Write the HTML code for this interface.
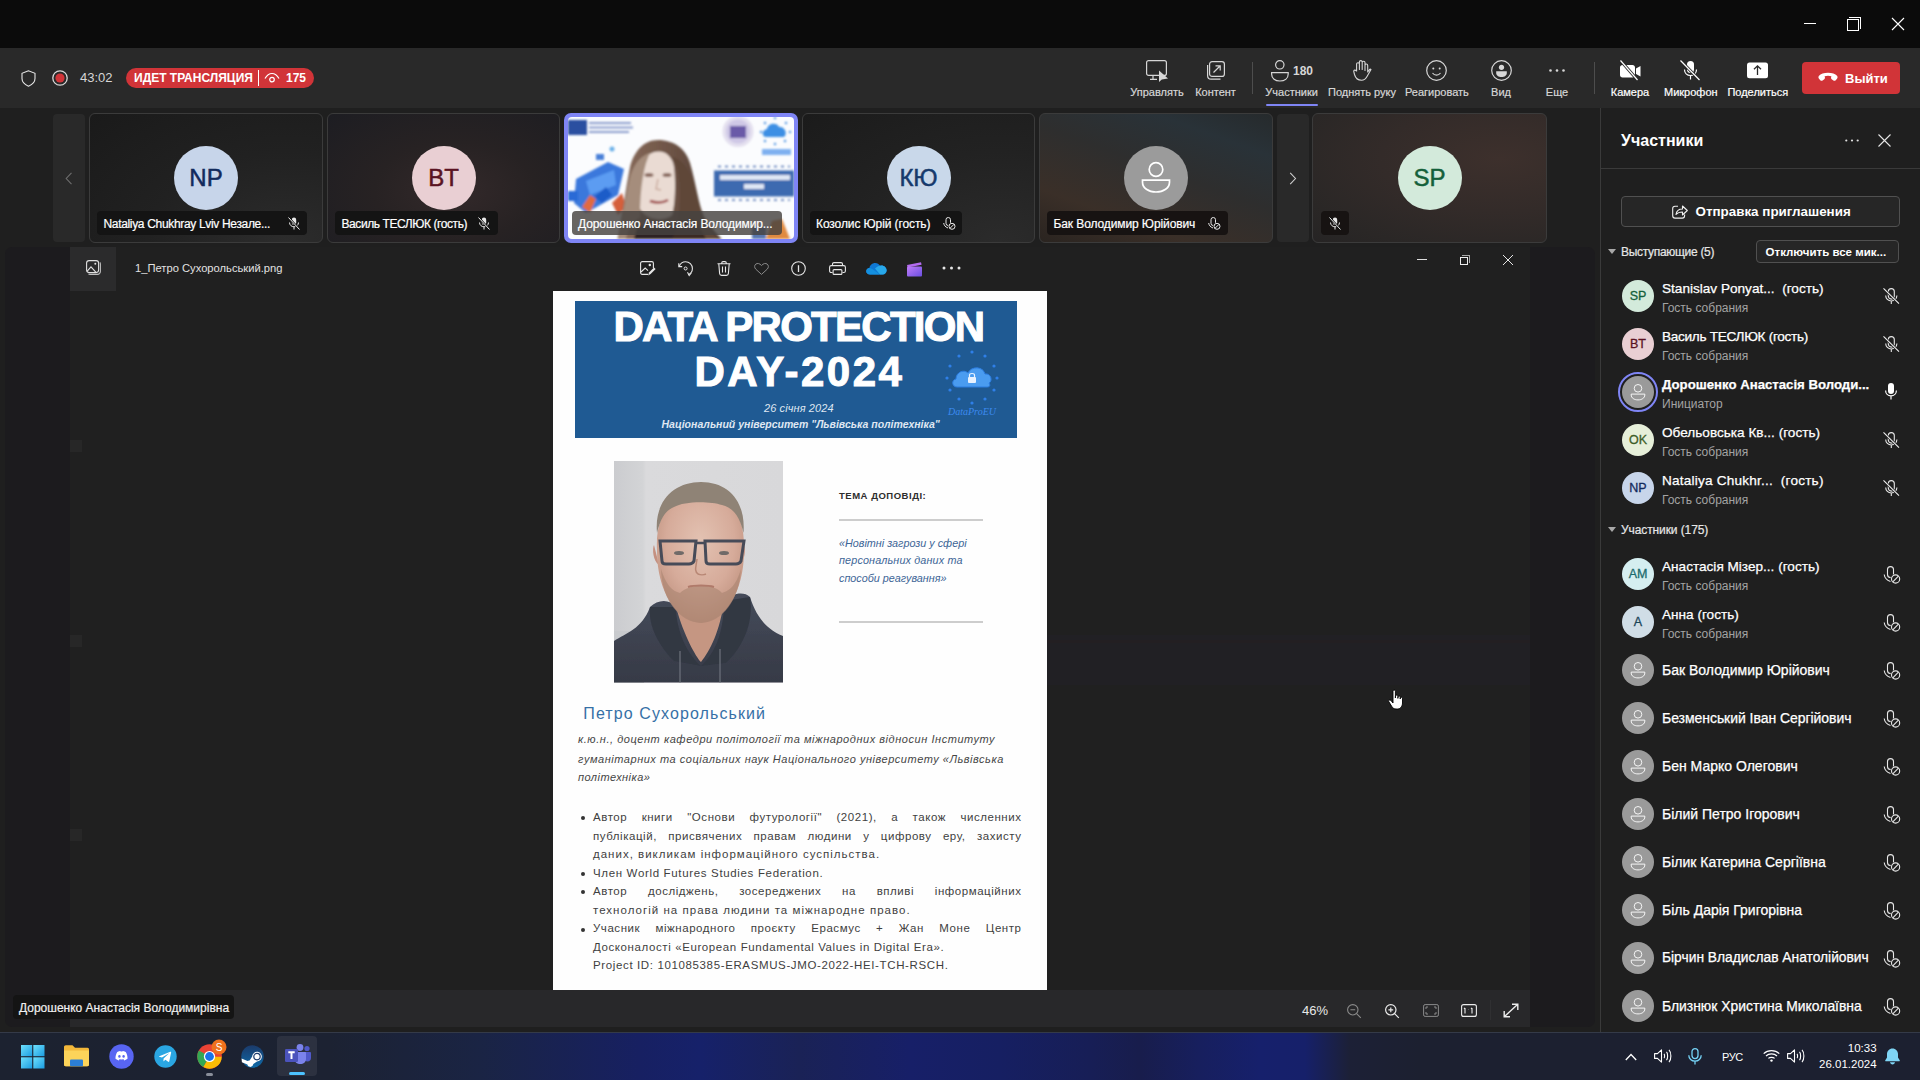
<!DOCTYPE html>
<html><head><meta charset="utf-8">
<style>
*{margin:0;padding:0;box-sizing:border-box}
html,body{width:1920px;height:1080px;overflow:hidden;background:#0b0b0b;font-family:"Liberation Sans",sans-serif;color:#fff}
.a{position:absolute}
.nw{white-space:nowrap}
svg{position:absolute;overflow:visible}
/* header */
#hdr{left:0;top:48px;width:1920px;height:60px;background:#292929}
.tb{position:absolute;top:88px;font-size:11px;color:#d6d6d6;white-space:nowrap;line-height:11px;-webkit-text-stroke:0.2px currentColor}
/* strip */
#strip{left:0;top:108px;width:1600px;height:142px;background:#1f1f1f}
.tile{position:absolute;top:113px;height:130px;border:1px solid #3b3b3b;border-radius:6px;overflow:hidden}
.av{position:absolute;border-radius:50%;text-align:center;-webkit-text-stroke:0.5px currentColor}
.nl{position:absolute;top:211px;height:24px;background:#141414;border-radius:4px}
.nlt{position:absolute;top:216.7px;font-size:12px;color:#fff;white-space:nowrap;line-height:14px;letter-spacing:-0.1px;-webkit-text-stroke:0.2px #fff}
/* panel */
#panel{left:1600px;top:108px;width:320px;height:924px;background:#1f1f1f;border-left:1px solid #3a3a3a}
.pn{position:absolute;left:1662px;font-size:13.6px;color:#fff;white-space:nowrap;line-height:16px;margin-top:-1px;-webkit-text-stroke:0.25px #fff}
.ps{position:absolute;left:1662px;font-size:12px;color:#a3a3a3;white-space:nowrap;line-height:14px;margin-top:-0.6px}
.pav{position:absolute;left:1622px;width:32px;height:32px;border-radius:50%;text-align:center;font-size:12.5px;line-height:32px;-webkit-text-stroke:0.3px currentColor}
.jl{position:absolute;left:40px;width:428.5px;letter-spacing:0.55px;font-size:11.5px;line-height:11.5px;color:#3f3f3f;text-align:justify;text-align-last:justify;white-space:nowrap}
.bl{position:absolute;left:40px;font-size:11.5px;line-height:11.5px;color:#3f3f3f;white-space:nowrap}
</style></head><body>

<!-- title bar -->
<div class="a" style="left:0;top:0;width:1920px;height:48px;background:#0b0b0b"></div>
<div class="a" style="left:1804px;top:23px;width:12px;height:1px;background:#fff"></div>
<div class="a" style="left:1847px;top:19px;width:12px;height:12px;border:1px solid #fff"></div>
<div class="a" style="left:1849px;top:17px;width:12px;height:12px;border-top:1px solid #fff;border-right:1px solid #fff"></div>
<svg style="left:1892px;top:18px" width="12" height="12"><path d="M0 0L12 12M12 0L0 12" stroke="#fff" stroke-width="1.1"/></svg>

<!-- header -->
<div id="hdr" class="a"></div>
<svg style="left:21px;top:70px" width="15" height="17" viewBox="0 0 15 17"><path d="M7.5 0.8L1 3.3V8.5C1 12 3.8 14.6 7.5 16.2C11.2 14.6 14 12 14 8.5V3.3Z" fill="none" stroke="#e6e6e6" stroke-width="1.1"/></svg>
<svg style="left:52px;top:70px" width="16" height="16" viewBox="0 0 16 16"><circle cx="8" cy="8" r="7.2" fill="none" stroke="#d8d8d8" stroke-width="1.3"/><circle cx="8" cy="8" r="4.6" fill="#d13438"/></svg>
<div class="a nw" style="left:80px;top:71.4px;font-size:13px;line-height:13px;color:#d6d6d6">43:02</div>
<div class="a" style="left:126px;top:68px;width:188px;height:20px;border-radius:10px;background:#d13438"></div>
<div class="a nw" style="left:134px;top:71.6px;font-size:12px;line-height:12px;font-weight:700;color:#fff">ИДЕТ ТРАНСЛЯЦИЯ</div>
<div class="a" style="left:258px;top:70px;width:1px;height:16px;background:#fff"></div>
<svg style="left:264px;top:72px" width="16" height="12" viewBox="0 0 16 12"><path d="M1 6.5C3 3 5.5 1.5 8 1.5S13 3 15 6.5" fill="none" stroke="#fff" stroke-width="1.2"/><circle cx="8" cy="7.6" r="2.3" fill="none" stroke="#fff" stroke-width="1.2"/></svg>
<div class="a nw" style="left:286px;top:71.6px;font-size:12px;line-height:12px;font-weight:700;color:#fff">175</div>

<!-- toolbar buttons -->
<svg style="left:1146px;top:60px" width="23" height="23" viewBox="0 0 23 23"><rect x="0.6" y="0.6" width="19.8" height="14.8" rx="2" fill="none" stroke="#d6d6d6" stroke-width="1.2"/><path d="M7 15.5V19M4 19.3H11" stroke="#d6d6d6" stroke-width="1.2"/><path d="M13 10.5L13 22L15.8 19.4L22 18.6Z" fill="#d6d6d6"/></svg>
<svg style="left:1207px;top:61px" width="18" height="19" viewBox="0 0 18 19"><rect x="2.6" y="0.6" width="14.8" height="14.8" rx="2.5" fill="none" stroke="#d6d6d6" stroke-width="1.2"/><path d="M0.6 4V14.5C0.6 16.6 2 18.2 4 18.2H13.5" fill="none" stroke="#d6d6d6" stroke-width="1.2"/><path d="M6.5 11.5L13 5M8.5 4.8H13.2V9.5" fill="none" stroke="#d6d6d6" stroke-width="1.2"/></svg>
<div class="a" style="left:1252px;top:62px;width:1px;height:32px;background:#4d4d4d"></div>
<svg style="left:1271px;top:60px" width="18" height="22" viewBox="0 0 18 22"><circle cx="8.8" cy="4.8" r="4.2" fill="none" stroke="#d6d6d6" stroke-width="1.2"/><path d="M0.6 12.6H17.2V14C17.2 18.5 13.5 21 8.9 21S0.6 18.5 0.6 14Z" fill="none" stroke="#d6d6d6" stroke-width="1.2"/></svg>
<div class="a nw" style="left:1293px;top:64.5px;font-size:12px;line-height:12px;font-weight:700;color:#d6d6d6">180</div>
<div class="a" style="left:1266px;top:104px;width:52px;height:2px;border-radius:1px;background:#7f85f5"></div>
<svg style="left:1353px;top:60px" width="18" height="21" viewBox="0 0 18 21"><path d="M3.6 11V4.2C3.6 3.3 4.2 2.7 5 2.7S6.4 3.3 6.4 4.2V9.5V2C6.4 1.2 7 0.6 7.8 0.6S9.2 1.2 9.2 2V9.5V2.6C9.2 1.8 9.8 1.2 10.6 1.2S12 1.8 12 2.6V10.5V5.4C12 4.6 12.6 4 13.3 4S14.7 4.6 14.7 5.4V12L16.5 9.6C17 9 17.6 9 18 9.5L14 16.5C12.8 18.7 11 20.3 8.6 20.3C5 20.3 2.4 17.6 1.5 14.5L0.8 11.6C0.6 10.8 1 10.2 1.7 10.1C2.5 10 3 10.4 3.6 11Z" fill="none" stroke="#d6d6d6" stroke-width="1.1" stroke-linejoin="round"/></svg>
<svg style="left:1426px;top:60px" width="21" height="21" viewBox="0 0 21 21"><circle cx="10.5" cy="10.5" r="9.8" fill="none" stroke="#d6d6d6" stroke-width="1.2"/><circle cx="7.3" cy="8.6" r="1" fill="#d6d6d6"/><circle cx="13.7" cy="8.6" r="1" fill="#d6d6d6"/><path d="M6.5 13C7.6 14.5 9 15.2 10.5 15.2S13.4 14.5 14.5 13" fill="none" stroke="#d6d6d6" stroke-width="1.2"/></svg>
<svg style="left:1491px;top:60px" width="21" height="21" viewBox="0 0 21 21"><circle cx="10.5" cy="10.5" r="9.8" fill="none" stroke="#d6d6d6" stroke-width="1.2"/><circle cx="10.5" cy="7.3" r="2.6" fill="#d6d6d6"/><path d="M5.2 11.2H15.8V13C15.8 15.5 13.5 17 10.5 17S5.2 15.5 5.2 13Z" fill="#d6d6d6"/></svg>
<svg style="left:1549px;top:69px" width="17" height="3" viewBox="0 0 17 3"><circle cx="1.5" cy="1.5" r="1.3" fill="#d6d6d6"/><circle cx="8" cy="1.5" r="1.3" fill="#d6d6d6"/><circle cx="14.5" cy="1.5" r="1.3" fill="#d6d6d6"/></svg>
<div class="a" style="left:1594px;top:62px;width:1px;height:32px;background:#4d4d4d"></div>
<svg style="left:1620px;top:60px" width="22" height="21" viewBox="0 0 22 21"><path d="M2.5 5H12.5C14 5 15 6 15 7.5V15C15 16.5 14 17.5 12.5 17.5H2.5C1 17.5 0 16.5 0 15V7.5C0 6 1 5 2.5 5Z M16 8.5L20.5 6V16.5L16 14Z" fill="#fff"/><path d="M0.5 0.5L17.5 20" stroke="#292929" stroke-width="3"/><path d="M0.5 0.5L17.5 20" stroke="#fff" stroke-width="1.2"/></svg>
<svg style="left:1680px;top:60px" width="21" height="21" viewBox="0 0 21 21"><rect x="7" y="1" width="7" height="12" rx="3.5" fill="#fff"/><path d="M4.5 9.5C4.5 13 7 15.5 10.5 15.5S16.5 13 16.5 9.5M10.5 15.5V19.5" fill="none" stroke="#fff" stroke-width="1.2"/><path d="M0.5 0.5L19.5 20" stroke="#292929" stroke-width="3"/><path d="M0.5 0.5L19.5 20" stroke="#fff" stroke-width="1.2"/></svg>
<svg style="left:1747px;top:62px" width="22" height="17" viewBox="0 0 22 17"><rect x="0" y="0.5" width="21" height="15.8" rx="2.5" fill="#fff"/><path d="M10.5 13V4M7 7.3L10.5 3.8L14 7.3" fill="none" stroke="#292929" stroke-width="1.3"/></svg>
<div class="tb" style="left:1107px;top:86.8px;width:100px;text-align:center">Управлять</div>
<div class="tb" style="left:1165.5px;top:86.8px;width:100px;text-align:center">Контент</div>
<div class="tb" style="left:1241.6px;top:86.8px;width:100px;text-align:center">Участники</div>
<div class="tb" style="left:1312px;top:86.8px;width:100px;text-align:center">Поднять руку</div>
<div class="tb" style="left:1386.9px;top:86.8px;width:100px;text-align:center">Реагировать</div>
<div class="tb" style="left:1451px;top:86.8px;width:100px;text-align:center">Вид</div>
<div class="tb" style="left:1507px;top:86.8px;width:100px;text-align:center">Еще</div>
<div class="tb" style="left:1580px;top:86.8px;width:100px;text-align:center;color:#fff">Камера</div>
<div class="tb" style="left:1640.8px;top:86.8px;width:100px;text-align:center;color:#fff">Микрофон</div>
<div class="tb" style="left:1707.8px;top:86.8px;width:100px;text-align:center;color:#fff">Поделиться</div>
<div class="a" style="left:1802px;top:62px;width:98px;height:32px;border-radius:4px;background:#d13438"></div>
<svg style="left:1818px;top:72px" width="20" height="10" viewBox="0 0 20 10"><path d="M10 0.8C6 0.8 2.6 2 1 3.8C0.2 4.7 0.3 6 1 6.8L2.3 8.3C2.9 9 3.9 9 4.6 8.5L6.3 7.2C6.9 6.8 7.1 6 6.9 5.3L6.6 4.3C7.6 3.9 8.8 3.7 10 3.7S12.4 3.9 13.4 4.3L13.1 5.3C12.9 6 13.1 6.8 13.7 7.2L15.4 8.5C16.1 9 17.1 9 17.7 8.3L19 6.8C19.7 6 19.8 4.7 19 3.8C17.4 2 14 0.8 10 0.8Z" fill="#fff"/></svg>
<div class="a nw" style="left:1845px;top:72px;font-size:13px;line-height:13px;font-weight:700;color:#fff">Выйти</div>

<!-- strip -->
<div id="strip" class="a"></div>
<div class="a" style="left:53px;top:114px;width:32px;height:128px;border-radius:4px;background:#292929"></div>
<svg style="left:65px;top:172px" width="8" height="13" viewBox="0 0 8 13"><path d="M6.5 0.8L1.2 6.5L6.5 12.2" fill="none" stroke="#6e6e6e" stroke-width="1.1"/></svg>
<div class="a" style="left:1277px;top:114px;width:32px;height:128px;border-radius:4px;background:#292929"></div>
<svg style="left:1289px;top:172px" width="8" height="13" viewBox="0 0 8 13"><path d="M1.2 0.8L6.5 6.5L1.2 12.2" fill="none" stroke="#cfcfcf" stroke-width="1.1"/></svg>

<div class="tile" style="left:89px;width:234px;background:radial-gradient(ellipse at 85% 100%,#2c2c2c 0%,#212121 50%,#1a1a1a 100%)"></div>
<div class="tile" style="left:327px;width:233px;background:radial-gradient(ellipse at 55% 60%,#33292a 0%,#272223 45%,#1d1d22 100%)"></div>
<div class="tile" style="left:802px;width:233px;background:radial-gradient(ellipse at 85% 100%,#2b2b2b 0%,#222 50%,#1b1b1b 100%)"></div>
<div class="tile" style="left:1039px;width:234px;background:linear-gradient(20deg,#2a2420 0%,#3a2f28 25%,#2e2e2e 55%,#293238 80%,#262a2c 100%)"></div>
<div class="tile" style="left:1312px;width:235px;background:radial-gradient(ellipse at 80% 35%,#3d302c 0%,#332b29 45%,#2a2726 80%,#262424 100%)"></div>

<div class="av" style="left:174px;top:146px;width:64px;height:64px;background:#c7d5ea;color:#122a5c;font-size:24px;line-height:64px">NP</div>
<div class="av" style="left:411.5px;top:146px;width:64px;height:64px;background:#e9cfd3;color:#5a1322;font-size:24px;line-height:64px">BT</div>
<div class="av" style="left:886.5px;top:146px;width:64px;height:64px;background:#c9d8ea;color:#163a6c;font-size:24px;line-height:64px">КЮ</div>
<div class="av" style="left:1124px;top:146px;width:64px;height:64px;background:#9b9b9b"></div>
<svg style="left:1140px;top:161px" width="32" height="32" viewBox="0 0 32 32"><circle cx="16" cy="8.5" r="6.8" fill="none" stroke="#fff" stroke-width="1.7"/><path d="M2.5 19.2H29.5V21.2C29.5 27 23.5 31 16 31S2.5 27 2.5 21.2Z" fill="none" stroke="#fff" stroke-width="1.7"/></svg>
<div class="av" style="left:1397.5px;top:146px;width:64px;height:64px;background:#d3eadb;color:#13603a;font-size:24px;line-height:64px">SP</div>

<!-- selected video tile -->
<div class="a" style="left:564px;top:113px;width:234px;height:130px;border-radius:7px;background:#7f85f5"></div>
<div class="a" style="left:568px;top:117px;width:226px;height:122px;border-radius:4px;overflow:hidden;background:#fbfcfe">
 <svg style="left:0;top:0" width="226" height="122" viewBox="0 0 226 122">
  <defs><filter id="vb" x="-5%" y="-5%" width="110%" height="110%"><feGaussianBlur stdDeviation="1"/></filter>
  <linearGradient id="hairg" x1="0" y1="0" x2="1" y2="0"><stop offset="0" stop-color="#8a6d5c"/><stop offset="0.5" stop-color="#6e5446"/><stop offset="1" stop-color="#4e3a30"/></linearGradient></defs>
  <g filter="url(#vb)">
  <rect x="0" y="3" width="19" height="15" fill="#2b4fa0"/>
  <rect x="21" y="5" width="42" height="2" fill="#8a9ccc"/><rect x="21" y="9.5" width="44" height="2" fill="#8a9ccc"/><rect x="21" y="14" width="40" height="2" fill="#8a9ccc"/>
  <circle cx="170" cy="14.5" r="15.5" fill="#e4e0ef"/><circle cx="170" cy="14.5" r="12" fill="#cfc8e6"/><rect x="162" y="9" width="16" height="12" fill="#6a5aa8"/>
  <path d="M198 20C194 20 193 13 199 12C200 6 209 5 211 10C217 9 220 17 216 20Z" fill="#3d8fe4"/>
  <g fill="#4a90e0"><circle cx="207" cy="1" r="1.2"/><circle cx="218" cy="6" r="1.2"/><circle cx="222" cy="15" r="1.2"/><circle cx="217" cy="24" r="1.2"/><circle cx="207" cy="27" r="1.2"/><circle cx="197" cy="24" r="1.2"/><circle cx="193" cy="15" r="1.2"/><circle cx="197" cy="6" r="1.2"/></g>
  <rect x="194" y="32" width="29" height="6" fill="#7fb0f0"/>
  <path d="M150 49.5H222" stroke="#4a6cb0" stroke-width="1.6" stroke-dasharray="3 4"/>
  <path d="M150 83H222" stroke="#4a6cb0" stroke-width="1.6" stroke-dasharray="3 4"/>
  <rect x="146" y="53.5" width="80" height="26" fill="#3e6bb0"/>
  <rect x="152" y="58" width="70" height="5" fill="#dfe7f5"/><rect x="176" y="67" width="20" height="5" fill="#dfe7f5"/>
  <path d="M8 62L40 45L56 52L50 78L18 96L6 86Z" fill="#3a78dc"/>
  <path d="M18 64L46 53L48 68L22 78Z" fill="#5b9cf2"/>
  <path d="M26 80L38 70L44 78L34 86Z" fill="#1f5cc8"/>
  <circle cx="44" cy="32" r="2.5" fill="#6ab0e8"/><rect x="28" y="37" width="8" height="6" fill="#4a80d8"/>
  <rect x="0" y="74" width="10" height="10" fill="#2a6ad6"/>
  <path d="M14 90L22 78L28 82L22 96Z" fill="#e06a40"/>
  <path d="M44 86L54 76L58 90L50 98Z" fill="#d55f3a"/>
  <path d="M49.5 122C54 100 58 70 62 50C66 34 76 23 90 23C106 23 118 32 122 46C128 66 130 86 136 100C142 110 150 118 153.7 122Z" fill="url(#hairg)"/>
  <path d="M72 92C70 70 70 46 80 38C92 30 104 36 106 50C108 66 107 88 104 98C96 104 80 104 72 92Z" fill="#eadbd3"/>
  <path d="M62 60C66 46 74 38 82 36C76 48 72 70 72 100C66 104 60 110 58 122H50C54 100 58 78 62 60Z" fill="#a58d7c"/>
  <path d="M104 40C112 50 114 80 110 104C116 110 124 116 130 122H150C140 110 132 96 128 76C124 58 118 44 104 40Z" fill="#5e4638"/>
  <ellipse cx="81" cy="58" rx="4.5" ry="2" fill="#8a6a5e"/><ellipse cx="99" cy="58" rx="4.5" ry="2" fill="#8a6a5e"/>
  <path d="M90 62L88 72L93 73" stroke="#c8a89a" stroke-width="1.3" fill="none"/>
  <path d="M82 84C88 86 95 86 100 83" stroke="#a04a4a" stroke-width="2.5" fill="none"/>
  <path d="M70 106C80 112 100 112 112 104L118 122H66Z" fill="#2e2420"/>
  <path d="M104 122C108 110 118 102 126 104C132 110 136 118 138 122Z" fill="#3a2a24"/>
  <path d="M198 122L204 104L214 102L222 122Z" fill="#e08a40"/><rect x="184" y="110" width="14" height="12" fill="#5a78b0"/>
  </g>
 </svg>
</div>

<div class="nl" style="left:97px;width:210px"></div>
<div class="nlt" style="left:103.5px;letter-spacing:-0.33px">Nataliya Chukhray Lviv Незале...</div>
<div class="nl" style="left:335px;width:163px"></div>
<div class="nlt" style="left:341.5px;letter-spacing:-0.42px">Василь ТЕСЛЮК (гость)</div>
<div class="nl" style="left:572px;width:210px;background:rgba(70,66,64,0.82)"></div>
<div class="nlt" style="left:578px">Дорошенко Анастасія Володимир...</div>
<div class="nl" style="left:810px;width:152px"></div>
<div class="nlt" style="left:816px">Козолис Юрій (гость)</div>
<div class="nl" style="left:1047px;width:181px;background:#171312"></div>
<div class="nlt" style="left:1053.5px">Бак Володимир Юрійович</div>
<div class="nl" style="left:1320.5px;width:28px;background:#171312"></div>
<svg style="left:287.5px;top:216.5px" width="12" height="13" viewBox="0 0 12 13"><rect x="3.8" y="0.5" width="4.4" height="7.5" rx="2.2" fill="#e8e8e8"/><path d="M1.5 5.5C1.5 8 3.5 9.8 6 9.8S10.5 8 10.5 5.5M6 9.8V12.5" fill="none" stroke="#e8e8e8" stroke-width="1"/><path d="M0.5 0.5L11.5 12.5" stroke="#141414" stroke-width="2.2"/><path d="M0.5 0.5L11.5 12.5" stroke="#f0f0f0" stroke-width="1"/></svg>
<svg style="left:477.5px;top:216.5px" width="12" height="13" viewBox="0 0 12 13"><rect x="3.8" y="0.5" width="4.4" height="7.5" rx="2.2" fill="#e8e8e8"/><path d="M1.5 5.5C1.5 8 3.5 9.8 6 9.8S10.5 8 10.5 5.5M6 9.8V12.5" fill="none" stroke="#e8e8e8" stroke-width="1"/><path d="M0.5 0.5L11.5 12.5" stroke="#141414" stroke-width="2.2"/><path d="M0.5 0.5L11.5 12.5" stroke="#f0f0f0" stroke-width="1"/></svg>
<svg style="left:942.5px;top:216.5px" width="13" height="13" viewBox="0 0 13 13"><rect x="3" y="0.5" width="4.5" height="8" rx="2.2" fill="none" stroke="#e8e8e8" stroke-width="1"/><path d="M0.7 6C0.9 8 2.2 10 5 11" fill="none" stroke="#e8e8e8" stroke-width="1"/><circle cx="9" cy="9.3" r="3.9" fill="#151312"/><circle cx="9" cy="9.3" r="3" fill="none" stroke="#e8e8e8" stroke-width="1"/><path d="M7 11.3L11 7.3" stroke="#e8e8e8" stroke-width="1"/></svg>
<svg style="left:1208px;top:216.5px" width="13" height="13" viewBox="0 0 13 13"><rect x="3" y="0.5" width="4.5" height="8" rx="2.2" fill="none" stroke="#e8e8e8" stroke-width="1"/><path d="M0.7 6C0.9 8 2.2 10 5 11" fill="none" stroke="#e8e8e8" stroke-width="1"/><circle cx="9" cy="9.3" r="3.9" fill="#151312"/><circle cx="9" cy="9.3" r="3" fill="none" stroke="#e8e8e8" stroke-width="1"/><path d="M7 11.3L11 7.3" stroke="#e8e8e8" stroke-width="1"/></svg>
<svg style="left:1329px;top:216.5px" width="12" height="13" viewBox="0 0 12 13"><rect x="3.8" y="0.5" width="4.4" height="7.5" rx="2.2" fill="#e8e8e8"/><path d="M1.5 5.5C1.5 8 3.5 9.8 6 9.8S10.5 8 10.5 5.5M6 9.8V12.5" fill="none" stroke="#e8e8e8" stroke-width="1"/><path d="M0.5 0.5L11.5 12.5" stroke="#141414" stroke-width="2.2"/><path d="M0.5 0.5L11.5 12.5" stroke="#f0f0f0" stroke-width="1"/></svg>

<!-- main stage -->
<div class="a" style="left:0;top:250px;width:1600px;height:782px;background:#1f1f1f"></div>
<div class="a" style="left:5px;top:247px;width:1590px;height:780px;border-radius:7px;background:#1c1b1e"></div>
<div class="a" style="left:70px;top:247px;width:1460px;height:780px;background:#202020"></div>
<div class="a" style="left:70px;top:247px;width:46px;height:44px;background:#2b2b2c"></div>
<svg style="left:86px;top:260px" width="15" height="15" viewBox="0 0 15 15"><rect x="0.6" y="0.6" width="12" height="12" rx="2.5" fill="none" stroke="#e0e0e0" stroke-width="1.1"/><path d="M2.5 13.8C2.8 14.3 3.3 14.4 4 14.4H11.5C13 14.4 14.4 13 14.4 11.5V4C14.4 3.3 14.3 2.8 13.8 2.5" fill="none" stroke="#bdbdbd" stroke-width="1.1"/><path d="M1 11.3L5 6.8L10 12.3" fill="none" stroke="#e0e0e0" stroke-width="1.1"/><circle cx="9.3" cy="3.8" r="1" fill="#e0e0e0"/></svg>
<div class="a nw" style="left:135px;top:262px;font-size:11.2px;line-height:12px;color:#e2e2e2">1_Петро Сухорольський.png</div>
<!-- viewer toolbar icons -->
<svg style="left:640px;top:261px" width="16" height="15" viewBox="0 0 16 15"><path d="M8 13.4H2.2C1.3 13.4 0.6 12.7 0.6 11.8V2.2C0.6 1.3 1.3 0.6 2.2 0.6H11.8C12.7 0.6 13.4 1.3 13.4 2.2V7" fill="none" stroke="#e6e6e6" stroke-width="1.1"/><path d="M1 11L5.2 7L8 9.6" fill="none" stroke="#e6e6e6" stroke-width="1.1"/><circle cx="9.8" cy="4" r="1.2" fill="#e6e6e6"/><path d="M8.2 14.5L9 11.5L14 6.5L15.6 8.1L10.6 13.1Z" fill="#e6e6e6"/></svg>
<svg style="left:678px;top:261px" width="16" height="15" viewBox="0 0 16 15"><path d="M1.3 5.2C2.3 2.5 4.7 0.7 7.6 0.7C11.3 0.7 14.4 3.7 14.4 7.5C14.4 10.3 12.6 12.7 10.2 13.7" fill="none" stroke="#e6e6e6" stroke-width="1.1"/><path d="M0.8 2.2V5.6H4.2" fill="none" stroke="#e6e6e6" stroke-width="1.1"/><path d="M9.5 11.3L11.2 14.5L13.3 12" fill="none" stroke="#e6e6e6" stroke-width="1.1"/><circle cx="7.6" cy="7.5" r="1.5" fill="none" stroke="#e6e6e6" stroke-width="1"/></svg>
<svg style="left:717px;top:261px" width="14" height="15" viewBox="0 0 14 15"><path d="M0.5 2.8H13.5M4.8 2.8V1.8C4.8 1.1 5.3 0.6 6 0.6H8C8.7 0.6 9.2 1.1 9.2 1.8V2.8M1.8 2.8L2.6 12.5C2.7 13.6 3.5 14.4 4.6 14.4H9.4C10.5 14.4 11.3 13.6 11.4 12.5L12.2 2.8M5.5 5.5V11.5M8.5 5.5V11.5" fill="none" stroke="#e6e6e6" stroke-width="1.1"/></svg>
<svg style="left:754px;top:263px" width="15" height="12" viewBox="0 0 15 12"><path d="M7.5 11.4L1.8 6.2C0.2 4.6 0.3 2.2 1.8 1.1C3.3 0 5.6 0.3 7.5 2.5C9.4 0.3 11.7 0 13.2 1.1C14.7 2.2 14.8 4.6 13.2 6.2Z" fill="none" stroke="#8a8a8a" stroke-width="1"/></svg>
<svg style="left:791px;top:261px" width="15" height="15" viewBox="0 0 15 15"><circle cx="7.5" cy="7.5" r="6.8" fill="none" stroke="#e6e6e6" stroke-width="1.1"/><path d="M7.5 4.2V11" stroke="#e6e6e6" stroke-width="1.3"/></svg>
<svg style="left:829px;top:262px" width="17" height="13" viewBox="0 0 17 13"><path d="M3.5 3.6V2C3.5 1.2 4.2 0.6 5 0.6H12C12.8 0.6 13.5 1.2 13.5 2V3.6M3.5 10.5H2.2C1.3 10.5 0.6 9.8 0.6 8.9V5.2C0.6 4.3 1.3 3.6 2.2 3.6H14.8C15.7 3.6 16.4 4.3 16.4 5.2V8.9C16.4 9.8 15.7 10.5 14.8 10.5H13.5" fill="none" stroke="#e6e6e6" stroke-width="1.1"/><rect x="4.1" y="7.6" width="8.8" height="4.8" rx="1" fill="none" stroke="#e6e6e6" stroke-width="1.1"/></svg>
<svg style="left:866px;top:262px" width="21" height="13" viewBox="0 0 21 13"><path d="M4 12.6C1.7 12.6 0.2 11 0.2 9.2C0.2 7.4 1.6 6 3.4 6C3.8 3.2 6.3 1 9.2 1C11.3 1 13.1 2.1 14.1 3.8C14.6 3.7 15 3.6 15.5 3.6C18.3 3.6 20.6 5.8 20.6 8.6C20.6 10.8 18.8 12.6 16.6 12.6Z" fill="#0f78d4"/><path d="M4 12.6C1.7 12.6 0.2 11 0.2 9.2C0.2 7.4 1.6 6 3.4 6C5 6 6.5 7 8 8.2L14 12.6Z" fill="#1490df"/><path d="M9 6.5C11 4.6 12.8 3.6 15.5 3.6C18.3 3.6 20.6 5.8 20.6 8.6C20.6 10.8 18.8 12.6 16.6 12.6H14Z" fill="#28a8ea"/></svg>
<svg style="left:906px;top:260px" width="17" height="17" viewBox="0 0 17 17"><path d="M1 5L15 2.2L15.6 4.8L1.6 7.6Z" fill="#b46bf0"/><rect x="1" y="6.5" width="15" height="10" rx="1" fill="url(#cg)"/><defs><linearGradient id="cg" x1="0" y1="0" x2="1" y2="1"><stop offset="0" stop-color="#c07cf8"/><stop offset="1" stop-color="#6a4fe0"/></linearGradient></defs></svg>
<svg style="left:942px;top:266px" width="19" height="4" viewBox="0 0 19 4"><circle cx="2" cy="2" r="1.5" fill="#e6e6e6"/><circle cx="9.5" cy="2" r="1.5" fill="#e6e6e6"/><circle cx="17" cy="2" r="1.5" fill="#e6e6e6"/></svg>
<div class="a" style="left:1417px;top:259px;width:10px;height:1px;background:#ddd"></div>
<div class="a" style="left:1460px;top:256.5px;width:8px;height:8px;border:1px solid #eee"></div>
<div class="a" style="left:1462px;top:255px;width:7.5px;height:8px;border-top:1px solid #aaa;border-right:1px solid #aaa"></div>
<svg style="left:1503px;top:255px" width="10" height="10"><path d="M0 0L10 10M10 0L0 10" stroke="#e6e6e6" stroke-width="1"/></svg>

<div class="a" style="left:70px;top:439.5px;width:12px;height:12px;background:#272727"></div>
<div class="a" style="left:70px;top:634.5px;width:12px;height:12px;background:#272727"></div>
<div class="a" style="left:70px;top:829px;width:12px;height:12px;background:#272727"></div>
<div class="a" style="left:1047px;top:635px;width:483px;height:50px;background:#212024"></div>
<div class="a" style="left:1047px;top:640px;width:483px;height:3px;background:#231f22"></div>
<!-- viewer bottom bar -->
<div class="a" style="left:70px;top:990px;width:1460px;height:37px;background:#28282a"></div>
<div class="a nw" style="left:1302px;top:1003.5px;font-size:13px;line-height:13px;color:#e8e8e8">46%</div>
<svg style="left:1347px;top:1004px" width="15" height="14" viewBox="0 0 15 14"><circle cx="5.8" cy="5.8" r="5.2" fill="none" stroke="#8a8a8a" stroke-width="1.1"/><path d="M3.4 5.8H8.2M9.6 9.6L13.8 13.8" stroke="#8a8a8a" stroke-width="1.1"/></svg>
<svg style="left:1385px;top:1003.5px" width="15" height="14" viewBox="0 0 15 14"><circle cx="5.8" cy="5.8" r="5.2" fill="none" stroke="#ececec" stroke-width="1.2"/><path d="M3.4 5.8H8.2M5.8 3.4V8.2M9.6 9.6L13.8 13.8" stroke="#ececec" stroke-width="1.2"/></svg>
<svg style="left:1423px;top:1004px" width="16" height="13" viewBox="0 0 16 13"><rect x="0.6" y="0.6" width="14.8" height="11.8" rx="1.5" fill="none" stroke="#8a8a8a" stroke-width="1"/><path d="M3 5V3H5M11 3H13V5M13 8V10H11M5 10H3V8" fill="none" stroke="#8a8a8a" stroke-width="1"/></svg>
<svg style="left:1461px;top:1004px" width="16" height="13" viewBox="0 0 16 13"><rect x="0.6" y="0.6" width="14.8" height="11.8" rx="2" fill="none" stroke="#ececec" stroke-width="1.1"/><path d="M4 4V9.5M7.5 5.3V5.4M7.5 8V8.1M11 4V9.5M3 4.8L4 4M10 4.8L11 4" fill="none" stroke="#ececec" stroke-width="1.1"/></svg>
<div class="a" style="left:1490px;top:1000px;width:1px;height:20px;background:#303032"></div>
<svg style="left:1503px;top:1002.5px" width="16" height="15" viewBox="0 0 16 15"><path d="M1.5 13.5L14.5 1.5M9 1.2H14.8V7M1.2 8V13.8H7" fill="none" stroke="#ececec" stroke-width="1.4"/></svg>

<!-- poster image -->
<div class="a" style="left:553px;top:291px;width:494px;height:699px;background:#fefefe;overflow:hidden" id="poster">
 <div class="a" style="left:22px;top:10px;width:442px;height:137px;background:#1f5a93"></div>
 <div class="a nw" style="left:60.5px;top:15.3px;font-size:42px;line-height:42px;font-weight:700;letter-spacing:-1.74px;color:#fff;-webkit-text-stroke:1px #fff">DATA PROTECTION</div>
 <div class="a nw" style="left:141.5px;top:59.5px;font-size:42px;line-height:42px;font-weight:700;letter-spacing:2.5px;color:#fff;-webkit-text-stroke:1px #fff">DAY-2024</div>
 <div class="a nw" style="left:211px;top:111.7px;font-size:11px;line-height:11px;font-style:italic;color:#dfe7f2;letter-spacing:0.1px">26 січня 2024</div>
 <div class="a nw" style="left:108.5px;top:127.8px;font-size:10.5px;line-height:10.5px;font-style:italic;font-weight:700;color:#dfe7f2">Національний університет "Львівська політехніка"</div>
 <svg style="left:390px;top:58px" width="58" height="72" viewBox="0 0 58 72">
  <g fill="#2f7fe8">
   <circle cx="29" cy="3" r="1.6"/><circle cx="42" cy="7" r="1.6"/><circle cx="51" cy="17" r="1.6"/><circle cx="54" cy="29" r="1.6"/><circle cx="51" cy="41" r="1.6"/><circle cx="42" cy="50" r="1.6"/><circle cx="29" cy="54" r="1.6"/><circle cx="16" cy="50" r="1.6"/><circle cx="7" cy="41" r="1.6"/><circle cx="4" cy="29" r="1.6"/><circle cx="7" cy="17" r="1.6"/><circle cx="16" cy="7" r="1.6"/>
  </g>
  <path d="M14 38C9 38 8 31 13 30C13 23 21 20 25 24C28 17 40 17 42 25C48 24 50 32 46 34C48 37 46 38 44 38Z" fill="#4a9cf0" stroke="#2b7ce0" stroke-width="1"/>
  <rect x="25" y="28" width="8" height="6" rx="1" fill="#e8f2ff"/><path d="M26.5 28V26C26.5 24 31.5 24 31.5 26V28" fill="none" stroke="#e8f2ff" stroke-width="1.2"/>
  <text x="29" y="66" font-family="Liberation Serif" font-style="italic" font-size="10" fill="#3d8af0" text-anchor="middle">DataProEU</text>
 </svg>
 <!-- photo -->
 <svg style="left:61.3px;top:170px" width="169" height="221.5" viewBox="0 0 169 221.5">
  <defs>
   <linearGradient id="bgp" x1="0" y1="0" x2="1" y2="0"><stop offset="0" stop-color="#cbcccf"/><stop offset="0.17" stop-color="#d3d4d6"/><stop offset="0.19" stop-color="#dadadc"/><stop offset="1" stop-color="#d8d8da"/></linearGradient>
   <radialGradient id="face" cx="0.5" cy="0.35" r="0.65"><stop offset="0" stop-color="#e3c2b2"/><stop offset="0.6" stop-color="#d6ab9a"/><stop offset="1" stop-color="#bd8f7c"/></radialGradient>
   <filter id="pb" x="-10%" y="-10%" width="120%" height="120%"><feGaussianBlur stdDeviation="0.6"/></filter><linearGradient id="hood" x1="0" y1="0" x2="0" y2="1"><stop offset="0" stop-color="#454b5a"/><stop offset="1" stop-color="#363a46"/></linearGradient>
  </defs>
  <rect width="169" height="221.5" fill="url(#bgp)"/><g filter="url(#pb)">
  <rect x="0" y="170" width="30" height="52" fill="#c8cacd"/>
  <path d="M62 140C62 170 70 195 87 205C104 195 114 170 113 140Z" fill="#c59682"/>
  <path d="M0 180C12 172 28 168 36 146C44 138 56 138 62 146C70 175 82 196 87 201C96 190 106 170 110 140C118 132 130 130 136 136C142 155 152 168 169 175V221.5H0Z" fill="url(#hood)"/>
  <path d="M36 146C34 165 45 185 60 200L87 205C70 190 62 165 62 146Z" fill="#323743"/>
  <path d="M136 136C140 160 130 185 112 202L87 205C104 190 110 165 110 140Z" fill="#323743"/>
  <path d="M66 190V221.5M106 188V221.5" stroke="#6a6e78" stroke-width="1.3"/>
  <path d="M40 84C38 88 39 100 45 104" fill="#c49080"/>
  <path d="M130 84C132 88 131 100 125 104" fill="#c49080"/>
  <path d="M43 90C41 50 58 36 87 36C116 36 131 50 130 90C130 130 112 160 87 162C62 160 43 130 43 90Z" fill="url(#face)"/>
  <path d="M47 108C48 140 66 161 87 162C108 161 125 140 127 108C122 125 115 130 108 132C100 122 76 122 66 132C58 130 52 124 47 108Z" fill="#a88470" opacity="0.6"/>
  <path d="M74 126C80 124 94 124 100 126" stroke="#b07a6a" stroke-width="2" fill="none"/>
  <path d="M43 72C40 40 60 21 87 21C114 21 132 40 129.5 72C126 55 118 46 108 44C96 40 70 40 60 46C50 50 46 60 43 72Z" fill="#8f8376"/>
  <path d="M46 80H82L80 100C79 102 77 103 75 103H52C50 103 48 102 48 100Z" fill="none" stroke="#474b58" stroke-width="3"/>
  <path d="M91 80H130L127 100C126 102 124 103 122 103H96C94 103 92 102 92 100Z" fill="none" stroke="#474b58" stroke-width="3"/>
  <path d="M82 82H91" stroke="#474b58" stroke-width="2.5"/>
  <ellipse cx="65" cy="92" rx="5" ry="2" fill="#6f6b68"/><ellipse cx="110" cy="92" rx="5" ry="2" fill="#6f6b68"/>
  <path d="M83 98C82 106 80 110 84 113C86 114 90 114 92 113" stroke="#b88775" stroke-width="1.5" fill="none"/>
 </g></svg>
 <div class="a nw" style="left:286px;top:199.6px;font-size:9.5px;line-height:9.5px;font-weight:700;letter-spacing:0.52px;color:#2d2d2d">ТЕМА ДОПОВІДІ:</div>
 <div class="a" style="left:286px;top:228px;width:144px;height:1.5px;background:#cdcdcd"></div>
 <div class="a nw" style="left:286px;top:246.7px;font-size:10.8px;line-height:10.8px;font-style:italic;color:#3d6596">«Новітні загрози у сфері</div>
 <div class="a nw" style="left:286px;top:264.4px;font-size:10.8px;line-height:10.8px;font-style:italic;color:#3d6596;letter-spacing:0.15px">персональних даних та</div>
 <div class="a nw" style="left:286px;top:281.9px;font-size:10.8px;line-height:10.8px;font-style:italic;color:#3d6596">способи реагування»</div>
 <div class="a" style="left:286px;top:330px;width:144px;height:1.5px;background:#cdcdcd"></div>
 <div class="a" style="left:0;top:392px;width:494px;height:0px"></div>
 <div class="a nw" style="left:30.3px;top:414.7px;font-size:16px;line-height:16px;color:#3670a6;letter-spacing:1.09px">Петро Сухорольський</div>
 <div class="a nw" style="left:25px;top:443.1px;font-size:11px;line-height:11px;font-style:italic;color:#454545;letter-spacing:0.55px">к.ю.н., доцент кафедри політології та міжнародних відносин Інституту</div>
 <div class="a nw" style="left:25px;top:462.6px;font-size:11px;line-height:11px;font-style:italic;color:#454545;letter-spacing:0.53px">гуманітарних та соціальних наук Національного університету «Львівська</div>
 <div class="a nw" style="left:25px;top:481.4px;font-size:11px;line-height:11px;font-style:italic;color:#454545;letter-spacing:0.46px">політехніка»</div>
 <div class="a" style="left:28px;top:525.0px;width:4px;height:4px;border-radius:2px;background:#333"></div>
 <div class="a" style="left:28px;top:581.0px;width:4px;height:4px;border-radius:2px;background:#333"></div>
 <div class="a" style="left:28px;top:599.0px;width:4px;height:4px;border-radius:2px;background:#333"></div>
 <div class="a" style="left:28px;top:636.5px;width:4px;height:4px;border-radius:2px;background:#333"></div>
 <div class="jl" style="top:520.8px">Автор книги "Основи футурології" (2021), а також численних</div>
 <div class="jl" style="top:539.8px">публікацій, присвячених правам людини у цифрову еру, захисту</div>
 <div class="bl" style="top:558px;letter-spacing:1px">даних, викликам інформаційного суспільства.</div>
 <div class="bl" style="top:576.6px;letter-spacing:0.66px">Член World Futures Studies Federation.</div>
 <div class="jl" style="top:594.9px">Автор досліджень, зосереджених на впливі інформаційних</div>
 <div class="bl" style="top:613.9px;letter-spacing:1.03px">технологій на права людини та міжнародне право.</div>
 <div class="jl" style="top:632.1px">Учасник міжнародного проєкту Ерасмус + Жан Моне Центр</div>
 <div class="bl" style="top:650.9px;letter-spacing:0.6px">Досконалості «European Fundamental Values in Digital Era».</div>
 <div class="bl" style="top:669.1px;letter-spacing:0.63px">Project ID: 101085385-ERASMUS-JMO-2022-HEI-TCH-RSCH.</div>
</div>

<svg style="left:1388px;top:690px" width="16" height="20" viewBox="0 0 16 20"><path d="M5 1.2C5 0.5 5.6 0 6.2 0S7.4 0.5 7.4 1.2V8L7.5 6.2C7.5 5.6 8.1 5.1 8.7 5.1S9.9 5.6 9.9 6.2V8.4L10 7C10 6.4 10.5 5.9 11.1 5.9S12.2 6.4 12.2 7V9L12.4 8.2C12.4 7.7 12.9 7.2 13.4 7.2S14.5 7.7 14.5 8.2V13C14.5 16 12.5 19 9.5 19H8C6 19 4.8 18 3.8 16.5L0.9 11.8C0.5 11.2 0.7 10.5 1.3 10.1C1.9 9.8 2.6 10 3 10.5L5 13Z" fill="#fff" stroke="#000" stroke-width="0.9"/></svg>
<!-- tooltip -->
<div class="a" style="left:13px;top:995px;width:221px;height:24px;border-radius:4px;background:rgba(20,20,20,0.96)"></div>
<div class="a nw" style="left:19px;top:1002px;font-size:12px;line-height:12px;color:#f0f0f0;-webkit-text-stroke:0.2px #f0f0f0">Дорошенко Анастасія Володимирівна</div>

<!-- panel -->
<div id="panel" class="a"></div>
<div class="a nw" style="left:1621px;top:132.8px;font-size:16px;line-height:16px;font-weight:700;color:#fff">Участники</div>
<svg style="left:1845px;top:139px" width="14" height="3" viewBox="0 0 14 3"><circle cx="1.3" cy="1.5" r="1.1" fill="#e0e0e0"/><circle cx="7" cy="1.5" r="1.1" fill="#e0e0e0"/><circle cx="12.7" cy="1.5" r="1.1" fill="#e0e0e0"/></svg>
<svg style="left:1877.5px;top:134px" width="13" height="13" viewBox="0 0 13 13"><path d="M0.5 0.5L12.5 12.5M12.5 0.5L0.5 12.5" stroke="#e6e6e6" stroke-width="1.1"/></svg>
<div class="a" style="left:1601px;top:168px;width:319px;height:1px;background:#3a3a3a"></div>
<div class="a" style="left:1621px;top:195.5px;width:279px;height:31px;border:1px solid #505050;border-radius:4px;background:#262626"></div>
<svg style="left:1672px;top:204px" width="16" height="15" viewBox="0 0 16 15"><path d="M6 2.2H3C1.7 2.2 0.7 3.2 0.7 4.5V11.8C0.7 13.1 1.7 14.1 3 14.1H10.3C11.6 14.1 12.6 13.1 12.6 11.8V10.5" fill="none" stroke="#f0f0f0" stroke-width="1.1"/><path d="M4 10.5C4.5 7 7 5 10.5 5V2L15.3 6.5L10.5 11V8C8 8 5.5 8.8 4 10.5Z" fill="none" stroke="#f0f0f0" stroke-width="1.1" stroke-linejoin="round"/></svg>
<div class="a nw" style="left:1695.5px;top:204.6px;font-size:13.4px;line-height:13.4px;font-weight:700;color:#fff">Отправка приглашения</div>
<svg style="left:1607.5px;top:248.7px" width="9" height="6" viewBox="0 0 9 6"><path d="M0 0H8L4 5Z" fill="#a8a8a8"/></svg>
<div class="a nw" style="left:1621px;top:246.1px;font-size:12px;line-height:12px;color:#e6e6e6;letter-spacing:-0.3px;-webkit-text-stroke:0.2px #e6e6e6">Выступающие (5)</div>
<div class="a" style="left:1755.5px;top:239.5px;width:143px;height:23px;border:1px solid #505050;border-radius:4px;background:#262626"></div>
<div class="a nw" style="left:1765.6px;top:246.6px;font-size:11.5px;line-height:11.5px;font-weight:700;color:#fff">Отключить все мик...</div>
<div class="pav" style="top:280px;background:#d3eadb;color:#13603a">SP</div>
<div class="pn" style="top:281.5px;">Stanislav Ponyat...&nbsp; (гость)</div>
<div class="ps" style="top:301.14px">Гость собрания</div>
<svg style="left:1883px;top:288px" width="17" height="17" viewBox="0 0 17 17"><rect x="5.3" y="0.6" width="6" height="10.5" rx="3" fill="none" stroke="#e8e8e8" stroke-width="1.1"/><path d="M2.7 7.6C2.7 10.7 5.2 13 8.3 13S13.9 10.7 13.9 7.6M8.3 13V16" fill="none" stroke="#e8e8e8" stroke-width="1.1"/><path d="M0.5 0.3L16 15.7" stroke="#1f1f1f" stroke-width="2.6"/><path d="M0.5 0.3L16 15.7" stroke="#f0f0f0" stroke-width="1.1"/></svg>
<div class="pav" style="top:328px;background:#e9cfd3;color:#5a1322">BT</div>
<div class="pn" style="top:329.5px;letter-spacing:-0.3px">Василь ТЕСЛЮК (гость)</div>
<div class="ps" style="top:349.14px">Гость собрания</div>
<svg style="left:1883px;top:336px" width="17" height="17" viewBox="0 0 17 17"><rect x="5.3" y="0.6" width="6" height="10.5" rx="3" fill="none" stroke="#e8e8e8" stroke-width="1.1"/><path d="M2.7 7.6C2.7 10.7 5.2 13 8.3 13S13.9 10.7 13.9 7.6M8.3 13V16" fill="none" stroke="#e8e8e8" stroke-width="1.1"/><path d="M0.5 0.3L16 15.7" stroke="#1f1f1f" stroke-width="2.6"/><path d="M0.5 0.3L16 15.7" stroke="#f0f0f0" stroke-width="1.1"/></svg>
<div class="a" style="left:1618px;top:372px;width:40px;height:40px;border-radius:50%;border:2px solid #7f85f5"></div>
<div class="pav" style="left:1622px;top:376px;background:#9a9a9a"></div><svg style="left:1630px;top:383.5px" width="16" height="17" viewBox="0 0 16 17"><circle cx="8" cy="4.3" r="3.8" fill="none" stroke="#fff" stroke-width="0.9"/><path d="M1.2 10.1H14.8V11C14.8 14 11.8 15.9 8 15.9S1.2 14 1.2 11Z" fill="none" stroke="#fff" stroke-width="0.9"/></svg>
<div class="pn" style="top:377.5px;font-weight:700;font-size:13.2px">Дорошенко Анастасія Володи...</div>
<div class="ps" style="top:397.14px">Инициатор</div>
<svg style="left:1885px;top:383px" width="12" height="17" viewBox="0 0 12 17"><rect x="3" y="0" width="6" height="11" rx="3" fill="#fff"/><path d="M0.6 7.5C0.6 10.6 3 12.8 6 12.8S11.4 10.6 11.4 7.5M6 12.8V16.5" fill="none" stroke="#fff" stroke-width="1.2"/></svg>
<div class="pav" style="top:424px;background:#e6efd9;color:#3d5e27">OK</div>
<div class="pn" style="top:425.5px;">Обельовська Кв... (гость)</div>
<div class="ps" style="top:445.14px">Гость собрания</div>
<svg style="left:1883px;top:432px" width="17" height="17" viewBox="0 0 17 17"><rect x="5.3" y="0.6" width="6" height="10.5" rx="3" fill="none" stroke="#e8e8e8" stroke-width="1.1"/><path d="M2.7 7.6C2.7 10.7 5.2 13 8.3 13S13.9 10.7 13.9 7.6M8.3 13V16" fill="none" stroke="#e8e8e8" stroke-width="1.1"/><path d="M0.5 0.3L16 15.7" stroke="#1f1f1f" stroke-width="2.6"/><path d="M0.5 0.3L16 15.7" stroke="#f0f0f0" stroke-width="1.1"/></svg>
<div class="pav" style="top:472px;background:#c7d5ea;color:#122a5c">NP</div>
<div class="pn" style="top:473.5px;letter-spacing:0.2px">Nataliya Chukhr...&nbsp; (гость)</div>
<div class="ps" style="top:493.14px">Гость собрания</div>
<svg style="left:1883px;top:480px" width="17" height="17" viewBox="0 0 17 17"><rect x="5.3" y="0.6" width="6" height="10.5" rx="3" fill="none" stroke="#e8e8e8" stroke-width="1.1"/><path d="M2.7 7.6C2.7 10.7 5.2 13 8.3 13S13.9 10.7 13.9 7.6M8.3 13V16" fill="none" stroke="#e8e8e8" stroke-width="1.1"/><path d="M0.5 0.3L16 15.7" stroke="#1f1f1f" stroke-width="2.6"/><path d="M0.5 0.3L16 15.7" stroke="#f0f0f0" stroke-width="1.1"/></svg>
<svg style="left:1607.5px;top:526.7px" width="9" height="6" viewBox="0 0 9 6"><path d="M0 0H8L4 5Z" fill="#a8a8a8"/></svg>
<div class="a nw" style="left:1621px;top:524.1px;font-size:12px;line-height:12px;color:#e6e6e6;letter-spacing:-0.1px;-webkit-text-stroke:0.2px #e6e6e6">Участники (175)</div>
<div class="pav" style="top:558px;background:#d5eef0;color:#1c6b6e">AM</div>
<div class="pn" style="top:559.5px;">Анастасія Мізер... (гость)</div>
<div class="ps" style="top:579.14px">Гость собрания</div>
<svg style="left:1883px;top:565.5px" width="18" height="18" viewBox="0 0 18 18"><rect x="4.5" y="0.6" width="6" height="11" rx="3" fill="none" stroke="#e8e8e8" stroke-width="1.1"/><path d="M1.2 8.5C1.5 11 3.5 14 7.5 15.5" fill="none" stroke="#e8e8e8" stroke-width="1.1"/><circle cx="12.6" cy="13" r="5.2" fill="#1f1f1f"/><circle cx="12.6" cy="13" r="4.1" fill="none" stroke="#e8e8e8" stroke-width="1.1"/><path d="M9.8 15.8L15.4 10.2" stroke="#e8e8e8" stroke-width="1.1"/></svg>
<div class="pav" style="top:606px;background:#d0dde6;color:#1b4658">A</div>
<div class="pn" style="top:607.5px;">Анна (гость)</div>
<div class="ps" style="top:627.14px">Гость собрания</div>
<svg style="left:1883px;top:613.5px" width="18" height="18" viewBox="0 0 18 18"><rect x="4.5" y="0.6" width="6" height="11" rx="3" fill="none" stroke="#e8e8e8" stroke-width="1.1"/><path d="M1.2 8.5C1.5 11 3.5 14 7.5 15.5" fill="none" stroke="#e8e8e8" stroke-width="1.1"/><circle cx="12.6" cy="13" r="5.2" fill="#1f1f1f"/><circle cx="12.6" cy="13" r="4.1" fill="none" stroke="#e8e8e8" stroke-width="1.1"/><path d="M9.8 15.8L15.4 10.2" stroke="#e8e8e8" stroke-width="1.1"/></svg>
<div class="pav" style="left:1622px;top:654px;background:#9a9a9a"></div><svg style="left:1630px;top:661.5px" width="16" height="17" viewBox="0 0 16 17"><circle cx="8" cy="4.3" r="3.8" fill="none" stroke="#fff" stroke-width="0.9"/><path d="M1.2 10.1H14.8V11C14.8 14 11.8 15.9 8 15.9S1.2 14 1.2 11Z" fill="none" stroke="#fff" stroke-width="0.9"/></svg>
<div class="pn" style="top:664.15px;line-height:14px;font-size:14px">Бак Володимир Юрійович</div>
<svg style="left:1883px;top:661.5px" width="18" height="18" viewBox="0 0 18 18"><rect x="4.5" y="0.6" width="6" height="11" rx="3" fill="none" stroke="#e8e8e8" stroke-width="1.1"/><path d="M1.2 8.5C1.5 11 3.5 14 7.5 15.5" fill="none" stroke="#e8e8e8" stroke-width="1.1"/><circle cx="12.6" cy="13" r="5.2" fill="#1f1f1f"/><circle cx="12.6" cy="13" r="4.1" fill="none" stroke="#e8e8e8" stroke-width="1.1"/><path d="M9.8 15.8L15.4 10.2" stroke="#e8e8e8" stroke-width="1.1"/></svg>
<div class="pav" style="left:1622px;top:702px;background:#9a9a9a"></div><svg style="left:1630px;top:709.5px" width="16" height="17" viewBox="0 0 16 17"><circle cx="8" cy="4.3" r="3.8" fill="none" stroke="#fff" stroke-width="0.9"/><path d="M1.2 10.1H14.8V11C14.8 14 11.8 15.9 8 15.9S1.2 14 1.2 11Z" fill="none" stroke="#fff" stroke-width="0.9"/></svg>
<div class="pn" style="top:712.15px;line-height:14px;font-size:14px;letter-spacing:-0.05px">Безменський Іван Сергійович</div>
<svg style="left:1883px;top:709.5px" width="18" height="18" viewBox="0 0 18 18"><rect x="4.5" y="0.6" width="6" height="11" rx="3" fill="none" stroke="#e8e8e8" stroke-width="1.1"/><path d="M1.2 8.5C1.5 11 3.5 14 7.5 15.5" fill="none" stroke="#e8e8e8" stroke-width="1.1"/><circle cx="12.6" cy="13" r="5.2" fill="#1f1f1f"/><circle cx="12.6" cy="13" r="4.1" fill="none" stroke="#e8e8e8" stroke-width="1.1"/><path d="M9.8 15.8L15.4 10.2" stroke="#e8e8e8" stroke-width="1.1"/></svg>
<div class="pav" style="left:1622px;top:750px;background:#9a9a9a"></div><svg style="left:1630px;top:757.5px" width="16" height="17" viewBox="0 0 16 17"><circle cx="8" cy="4.3" r="3.8" fill="none" stroke="#fff" stroke-width="0.9"/><path d="M1.2 10.1H14.8V11C14.8 14 11.8 15.9 8 15.9S1.2 14 1.2 11Z" fill="none" stroke="#fff" stroke-width="0.9"/></svg>
<div class="pn" style="top:760.15px;line-height:14px;font-size:14px">Бен Марко Олегович</div>
<svg style="left:1883px;top:757.5px" width="18" height="18" viewBox="0 0 18 18"><rect x="4.5" y="0.6" width="6" height="11" rx="3" fill="none" stroke="#e8e8e8" stroke-width="1.1"/><path d="M1.2 8.5C1.5 11 3.5 14 7.5 15.5" fill="none" stroke="#e8e8e8" stroke-width="1.1"/><circle cx="12.6" cy="13" r="5.2" fill="#1f1f1f"/><circle cx="12.6" cy="13" r="4.1" fill="none" stroke="#e8e8e8" stroke-width="1.1"/><path d="M9.8 15.8L15.4 10.2" stroke="#e8e8e8" stroke-width="1.1"/></svg>
<div class="pav" style="left:1622px;top:798px;background:#9a9a9a"></div><svg style="left:1630px;top:805.5px" width="16" height="17" viewBox="0 0 16 17"><circle cx="8" cy="4.3" r="3.8" fill="none" stroke="#fff" stroke-width="0.9"/><path d="M1.2 10.1H14.8V11C14.8 14 11.8 15.9 8 15.9S1.2 14 1.2 11Z" fill="none" stroke="#fff" stroke-width="0.9"/></svg>
<div class="pn" style="top:808.15px;line-height:14px;font-size:14px">Білий Петро Ігорович</div>
<svg style="left:1883px;top:805.5px" width="18" height="18" viewBox="0 0 18 18"><rect x="4.5" y="0.6" width="6" height="11" rx="3" fill="none" stroke="#e8e8e8" stroke-width="1.1"/><path d="M1.2 8.5C1.5 11 3.5 14 7.5 15.5" fill="none" stroke="#e8e8e8" stroke-width="1.1"/><circle cx="12.6" cy="13" r="5.2" fill="#1f1f1f"/><circle cx="12.6" cy="13" r="4.1" fill="none" stroke="#e8e8e8" stroke-width="1.1"/><path d="M9.8 15.8L15.4 10.2" stroke="#e8e8e8" stroke-width="1.1"/></svg>
<div class="pav" style="left:1622px;top:846px;background:#9a9a9a"></div><svg style="left:1630px;top:853.5px" width="16" height="17" viewBox="0 0 16 17"><circle cx="8" cy="4.3" r="3.8" fill="none" stroke="#fff" stroke-width="0.9"/><path d="M1.2 10.1H14.8V11C14.8 14 11.8 15.9 8 15.9S1.2 14 1.2 11Z" fill="none" stroke="#fff" stroke-width="0.9"/></svg>
<div class="pn" style="top:856.15px;line-height:14px;font-size:14px">Білик Катерина Сергіївна</div>
<svg style="left:1883px;top:853.5px" width="18" height="18" viewBox="0 0 18 18"><rect x="4.5" y="0.6" width="6" height="11" rx="3" fill="none" stroke="#e8e8e8" stroke-width="1.1"/><path d="M1.2 8.5C1.5 11 3.5 14 7.5 15.5" fill="none" stroke="#e8e8e8" stroke-width="1.1"/><circle cx="12.6" cy="13" r="5.2" fill="#1f1f1f"/><circle cx="12.6" cy="13" r="4.1" fill="none" stroke="#e8e8e8" stroke-width="1.1"/><path d="M9.8 15.8L15.4 10.2" stroke="#e8e8e8" stroke-width="1.1"/></svg>
<div class="pav" style="left:1622px;top:894px;background:#9a9a9a"></div><svg style="left:1630px;top:901.5px" width="16" height="17" viewBox="0 0 16 17"><circle cx="8" cy="4.3" r="3.8" fill="none" stroke="#fff" stroke-width="0.9"/><path d="M1.2 10.1H14.8V11C14.8 14 11.8 15.9 8 15.9S1.2 14 1.2 11Z" fill="none" stroke="#fff" stroke-width="0.9"/></svg>
<div class="pn" style="top:904.15px;line-height:14px;font-size:14px">Біль Дарія Григорівна</div>
<svg style="left:1883px;top:901.5px" width="18" height="18" viewBox="0 0 18 18"><rect x="4.5" y="0.6" width="6" height="11" rx="3" fill="none" stroke="#e8e8e8" stroke-width="1.1"/><path d="M1.2 8.5C1.5 11 3.5 14 7.5 15.5" fill="none" stroke="#e8e8e8" stroke-width="1.1"/><circle cx="12.6" cy="13" r="5.2" fill="#1f1f1f"/><circle cx="12.6" cy="13" r="4.1" fill="none" stroke="#e8e8e8" stroke-width="1.1"/><path d="M9.8 15.8L15.4 10.2" stroke="#e8e8e8" stroke-width="1.1"/></svg>
<div class="pav" style="left:1622px;top:942px;background:#9a9a9a"></div><svg style="left:1630px;top:949.5px" width="16" height="17" viewBox="0 0 16 17"><circle cx="8" cy="4.3" r="3.8" fill="none" stroke="#fff" stroke-width="0.9"/><path d="M1.2 10.1H14.8V11C14.8 14 11.8 15.9 8 15.9S1.2 14 1.2 11Z" fill="none" stroke="#fff" stroke-width="0.9"/></svg>
<div class="pn" style="top:952.15px;line-height:14px;font-size:13.8px">Бірчин Владислав Анатолійович</div>
<svg style="left:1883px;top:949.5px" width="18" height="18" viewBox="0 0 18 18"><rect x="4.5" y="0.6" width="6" height="11" rx="3" fill="none" stroke="#e8e8e8" stroke-width="1.1"/><path d="M1.2 8.5C1.5 11 3.5 14 7.5 15.5" fill="none" stroke="#e8e8e8" stroke-width="1.1"/><circle cx="12.6" cy="13" r="5.2" fill="#1f1f1f"/><circle cx="12.6" cy="13" r="4.1" fill="none" stroke="#e8e8e8" stroke-width="1.1"/><path d="M9.8 15.8L15.4 10.2" stroke="#e8e8e8" stroke-width="1.1"/></svg>
<div class="pav" style="left:1622px;top:990px;background:#9a9a9a"></div><svg style="left:1630px;top:997.5px" width="16" height="17" viewBox="0 0 16 17"><circle cx="8" cy="4.3" r="3.8" fill="none" stroke="#fff" stroke-width="0.9"/><path d="M1.2 10.1H14.8V11C14.8 14 11.8 15.9 8 15.9S1.2 14 1.2 11Z" fill="none" stroke="#fff" stroke-width="0.9"/></svg>
<div class="pn" style="top:1000.15px;line-height:14px;font-size:13.9px">Близнюк Христина Миколаївна</div>
<svg style="left:1883px;top:997.5px" width="18" height="18" viewBox="0 0 18 18"><rect x="4.5" y="0.6" width="6" height="11" rx="3" fill="none" stroke="#e8e8e8" stroke-width="1.1"/><path d="M1.2 8.5C1.5 11 3.5 14 7.5 15.5" fill="none" stroke="#e8e8e8" stroke-width="1.1"/><circle cx="12.6" cy="13" r="5.2" fill="#1f1f1f"/><circle cx="12.6" cy="13" r="4.1" fill="none" stroke="#e8e8e8" stroke-width="1.1"/><path d="M9.8 15.8L15.4 10.2" stroke="#e8e8e8" stroke-width="1.1"/></svg>

<!-- taskbar -->
<div class="a" style="left:0;top:1032px;width:1920px;height:48px;background:linear-gradient(90deg,#1c2230 0px,#1c2232 330px,#1a2444 480px,#172062 640px,#16216a 700px,#1a2256 800px,#171f68 910px,#161f62 1000px,#171e56 1090px,#181d4c 1140px,#171f5e 1200px,#16206c 1260px,#16206a 1305px,#1c2036 1350px,#1c2030 1420px,#1c2030 1920px)"></div>

<div class="a" style="left:0;top:1032px;width:1920px;height:1px;background:#343a48"></div>
<!-- taskbar icons -->
<svg style="left:21px;top:1045px" width="24" height="24" viewBox="0 0 24 24"><defs><linearGradient id="wg" x1="0" y1="0" x2="1" y2="1"><stop offset="0" stop-color="#6ee0fc"/><stop offset="1" stop-color="#1b9de2"/></linearGradient></defs><rect x="0" y="0" width="11.2" height="11.2" fill="url(#wg)"/><rect x="12.3" y="0" width="11.2" height="11.2" fill="url(#wg)"/><rect x="0" y="12.3" width="11.2" height="11.2" fill="url(#wg)"/><rect x="12.3" y="12.3" width="11.2" height="11.2" fill="url(#wg)"/></svg>
<svg style="left:64px;top:1045px" width="26" height="22" viewBox="0 0 26 22"><path d="M0 2C0 1 0.8 0.3 1.8 0.3H8.5L11 2.8H23.5C24.5 2.8 25 3.5 25 4.5V19.5C25 20.5 24.3 21.2 23.3 21.2H1.7C0.7 21.2 0 20.5 0 19.5Z" fill="#f3b83a"/><path d="M0 5.5H25V19.5C25 20.5 24.3 21.2 23.3 21.2H1.7C0.7 21.2 0 20.5 0 19.5Z" fill="#fcd45a"/><rect x="6" y="14.5" width="13" height="6.7" rx="1" fill="#2b7fd6"/></svg>
<svg style="left:108.5px;top:1044px" width="25" height="25" viewBox="0 0 25 25"><circle cx="12.5" cy="12.5" r="12.2" fill="#5865f2"/><path d="M8.3 8C9.5 7.4 10.6 7.1 11.3 7L11.6 7.6C12.2 7.5 12.8 7.5 13.4 7.6L13.7 7C14.4 7.1 15.5 7.4 16.7 8C18 10 18.6 12.2 18.5 14.8C17.3 15.7 16.2 16.2 15.2 16.5L14.5 15.4C15 15.2 15.4 15 15.8 14.8C13.7 15.8 11.3 15.8 9.2 14.8C9.6 15 10 15.2 10.5 15.4L9.8 16.5C8.8 16.2 7.7 15.7 6.5 14.8C6.4 12.2 7 10 8.3 8Z" fill="#fff"/><ellipse cx="10.4" cy="12.4" rx="1.2" ry="1.3" fill="#5865f2"/><ellipse cx="14.6" cy="12.4" rx="1.2" ry="1.3" fill="#5865f2"/></svg>
<svg style="left:153.5px;top:1045px" width="23" height="23" viewBox="0 0 23 23"><circle cx="11.5" cy="11.5" r="11.2" fill="#2aa6e2"/><path d="M5.2 11.2L16.3 6.8C16.8 6.6 17.3 6.9 17.1 7.7L15.3 16.3C15.1 16.9 14.7 17.1 14.2 16.8L11.4 14.7L10 16C9.8 16.2 9.7 16.3 9.4 16.3L9.6 13.4L14.9 8.6C15.1 8.4 14.8 8.3 14.6 8.5L8 12.6L5.2 11.7C4.6 11.5 4.6 11.4 5.2 11.2Z" fill="#fff"/></svg>
<svg style="left:196.5px;top:1044px" width="25" height="25" viewBox="0 0 25 25"><circle cx="12.5" cy="12.5" r="12.2" fill="#ea4335"/><path d="M12.5 12.5L1.9 6.4A12.2 12.2 0 0 0 6.4 23.1Z" fill="#34a853"/><path d="M12.5 12.5L6.4 23.1A12.2 12.2 0 0 0 24.7 12.5Z" fill="#fbbc04"/><path d="M12.5 12.5L24.7 12.5A12.2 12.2 0 0 0 23.1 6.4Z" fill="#ea4335"/><circle cx="12.5" cy="12.5" r="5.6" fill="#fff"/><circle cx="12.5" cy="12.5" r="4.4" fill="#1a73e8"/></svg>
<svg style="left:210.5px;top:1039px" width="16" height="16" viewBox="0 0 16 16"><circle cx="8" cy="8" r="7.5" fill="#f0711d"/><text x="8" y="11.6" font-family="Liberation Sans" font-size="10" fill="#fff" text-anchor="middle">S</text></svg>
<div class="a" style="left:205.5px;top:1072.5px;width:7px;height:3px;border-radius:1.5px;background:#8a8f9a"></div>
<svg style="left:241px;top:1045px" width="23" height="23" viewBox="0 0 23 23"><defs><linearGradient id="stg" x1="0" y1="0" x2="0" y2="1"><stop offset="0" stop-color="#1b3a6a"/><stop offset="1" stop-color="#0e6aa8"/></linearGradient></defs><circle cx="11.5" cy="11.5" r="11.2" fill="url(#stg)"/><path d="M0.6 13.5L6.5 16C7.1 15.5 7.8 15.3 8.6 15.4L11.2 11.6C11.2 8.9 13.4 6.8 16 6.8C18.7 6.8 20.8 9 20.8 11.6C20.8 14.3 18.6 16.4 16 16.4L12.3 19.1C12.2 20.7 10.9 21.9 9.3 21.9C7.9 21.9 6.7 20.9 6.4 19.6L0.9 17.3Z" fill="#fff"/><circle cx="16" cy="11.6" r="3.2" fill="none" stroke="#1b3a6a" stroke-width="1.2"/></svg>
<div class="a" style="left:277px;top:1036px;width:40px;height:40px;border-radius:4px;background:rgba(255,255,255,0.07)"></div>
<svg style="left:284.5px;top:1044px" width="26" height="20" viewBox="0 0 26 20"><circle cx="22" cy="4.5" r="2.6" fill="#5059c9"/><path d="M18.5 8H25C25.5 8 26 8.5 26 9V14C26 16 24.5 17.5 22.5 17.5S18.5 16 18.5 14Z" fill="#5059c9"/><circle cx="15" cy="3.5" r="3.4" fill="#7b83eb"/><path d="M9.5 8H20C20.6 8 21 8.4 21 9V15C21 18 18.5 20 15.3 20S9.5 18 9.5 15Z" fill="#7b83eb"/><rect x="0" y="5" width="13" height="13" rx="1.3" fill="#4b53bc"/><path d="M3.3 8.3H9.7M6.5 8.3V15" stroke="#fff" stroke-width="2"/></svg>
<div class="a" style="left:288.5px;top:1072px;width:16.5px;height:3px;border-radius:1.5px;background:#4cc2ff"></div>
<!-- tray -->
<svg style="left:1625px;top:1052.5px" width="12" height="8" viewBox="0 0 12 8"><path d="M0.8 7L6 1.5L11.2 7" fill="none" stroke="#fff" stroke-width="1.3"/></svg>
<svg style="left:1654px;top:1049px" width="18" height="14" viewBox="0 0 18 14"><path d="M0.6 4.6H3.5L7.5 0.9V13.1L3.5 9.4H0.6Z" fill="none" stroke="#fff" stroke-width="1.1" stroke-linejoin="round"/><path d="M10 4.8C10.8 5.5 10.8 8.5 10 9.2M12.5 2.8C14 4.5 14 9.5 12.5 11.2M15 0.9C17.5 3.5 17.5 10.5 15 13.1" fill="none" stroke="#fff" stroke-width="1.1"/></svg>
<svg style="left:1688px;top:1048px" width="14" height="17" viewBox="0 0 14 17"><rect x="4" y="0.6" width="6" height="10" rx="3" fill="none" stroke="#75d2f5" stroke-width="1.3"/><path d="M0.8 7.3C0.8 10.7 3.5 13.2 7 13.2S13.2 10.7 13.2 7.3M7 13.2V16.4" fill="none" stroke="#75d2f5" stroke-width="1.3"/></svg>
<div class="a nw" style="left:1722px;top:1051.6px;font-size:11px;line-height:11px;color:#fff;letter-spacing:-0.4px">РУС</div>
<svg style="left:1763px;top:1049px" width="17" height="13" viewBox="0 0 17 13"><path d="M0.7 4.6C4.9 0.5 12.1 0.5 16.3 4.6M3 7C5.9 4.2 11.1 4.2 14 7M5.4 9.4C7 7.9 10 7.9 11.6 9.4" fill="none" stroke="#fff" stroke-width="1.2"/><circle cx="8.5" cy="11.6" r="1.2" fill="#fff"/></svg>
<svg style="left:1786.5px;top:1049px" width="18" height="14" viewBox="0 0 18 14"><path d="M0.6 4.6H3.5L7.5 0.9V13.1L3.5 9.4H0.6Z" fill="none" stroke="#fff" stroke-width="1.1" stroke-linejoin="round"/><path d="M10 4.8C10.8 5.5 10.8 8.5 10 9.2M12.5 2.8C14 4.5 14 9.5 12.5 11.2M15 0.9C17.5 3.5 17.5 10.5 15 13.1" fill="none" stroke="#fff" stroke-width="1.1"/></svg>
<div class="a nw" style="left:1776.6px;width:100px;text-align:right;top:1042.5px;font-size:11.5px;line-height:11.5px;color:#fff">10:33</div>
<div class="a nw" style="left:1776.6px;width:100px;text-align:right;top:1058.5px;font-size:11.5px;line-height:11.5px;color:#fff">26.01.2024</div>
<svg style="left:1885px;top:1048px" width="15" height="17" viewBox="0 0 15 17"><path d="M7.5 0.5C4.3 0.5 2 3 2 6V9.5L0.3 12.3C0 12.8 0.3 13.3 0.9 13.3H14.1C14.7 13.3 15 12.8 14.7 12.3L13 9.5V6C13 3 10.7 0.5 7.5 0.5Z" fill="#7fd5f5"/><path d="M5 14.3C5.3 15.6 6.3 16.5 7.5 16.5S9.7 15.6 10 14.3Z" fill="#7fd5f5"/></svg>
</body></html>
